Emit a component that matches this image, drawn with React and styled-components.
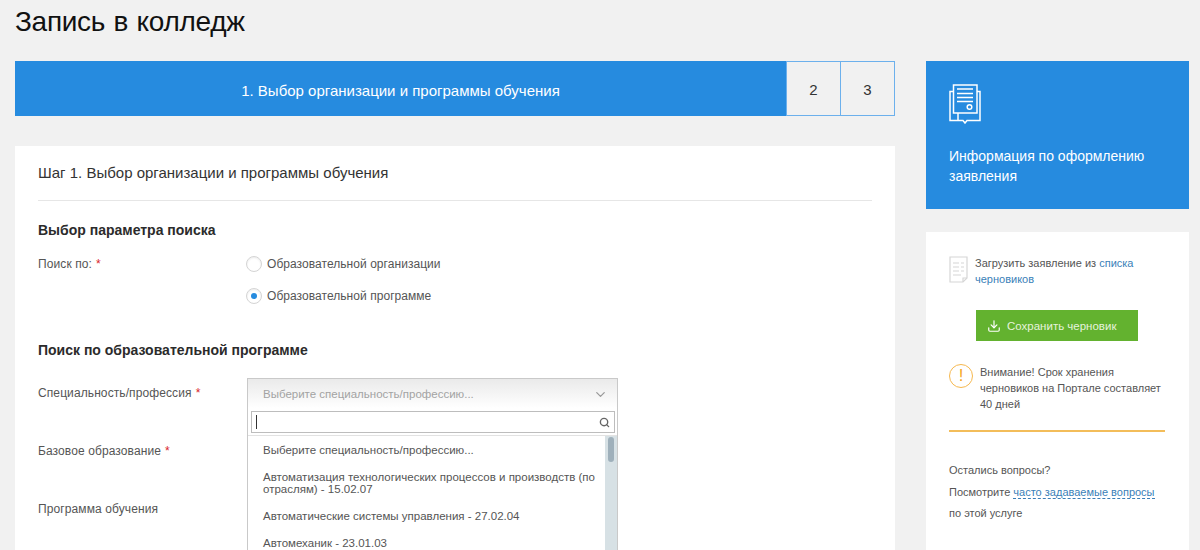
import styled, { createGlobalStyle } from 'styled-components';
import { Download, ChevronDown, Search } from 'lucide-react';

const GlobalStyle = createGlobalStyle`
  html, body {
    margin: 0;
    height: 550px;
    overflow: hidden;
    background: #f1f1f1;
    font-family: "Liberation Sans", Arial, sans-serif;
    color: #333;
  }
`;

const Page = styled.div`
  width: 1200px;
  height: 550px;
  overflow: hidden;
  box-sizing: border-box;
  padding: 0 11px 0 15px;
`;

const Title = styled.h1`
  margin: 0;
  height: 61px;
  padding-top: 5px;
  box-sizing: border-box;
  font-size: 28px;
  line-height: 34px;
  font-weight: 400;
  letter-spacing: -0.3px;
  word-spacing: 1px;
  color: #111;
`;

const Columns = styled.div`
  display: flex;
  gap: 31px;
  align-items: flex-start;
`;

const Main = styled.div`
  width: 880px;
  flex: none;
`;

const Steps = styled.div`
  display: flex;
  height: 55px;
  margin-bottom: 30px;
`;

const ActiveStep = styled.div`
  flex: 1;
  background: #268bdf;
  color: #fff;
  font-size: 15px;
  padding-top: 3px;
  display: flex;
  align-items: center;
  justify-content: center;
`;

const Step = styled.div`
  width: 55px;
  box-sizing: border-box;
  border: 1px solid #6cb0ec;
  margin-left: ${({ $first }) => ($first ? '0' : '-1px')};
  padding-top: 2px;
  font-size: 15px;
  color: #333;
  display: flex;
  align-items: center;
  justify-content: center;
`;

const Card = styled.div`
  background: #fff;
  padding: 0 23px;
  height: 404px;
`;

const CardHeader = styled.div`
  height: 54px;
  line-height: 54px;
  font-size: 15px;
  border-bottom: 1px solid #e6e6e6;
  color: #333;
`;

const SectionTitle = styled.h3`
  margin: 0;
  font-size: 14px;
  line-height: 18px;
  font-weight: 700;
  color: #2b2b2b;
  padding-top: ${({ $top }) => $top}px;
`;

const Row = styled.div`
  display: flex;
  margin-top: ${({ $top }) => $top || 0}px;
`;

const Label = styled.div`
  width: 209px;
  flex: none;
  box-sizing: border-box;
  padding-top: ${({ $pad }) => $pad || 0}px;
  font-size: 12px;
  letter-spacing: 0.1px;
  line-height: 16px;
  color: #555;
`;

const Required = styled.span`
  color: #d9242a;
  margin-left: 4px;
`;

const RadioGroup = styled.div`
  display: flex;
  flex-direction: column;
  gap: 16px;
`;

const RadioRow = styled.div`
  display: flex;
  align-items: center;
  gap: 5px;
  font-size: 12px;
  letter-spacing: 0.05px;
  line-height: 16px;
  color: #555;
`;

const RadioCircle = styled.span`
  width: 16px;
  height: 16px;
  margin-left: -1px;
  box-sizing: border-box;
  border: 1px solid #d4d4d4;
  border-radius: 50%;
  background: #fff;
  box-shadow: inset 0 1px 2px rgba(0, 0, 0, 0.08);
  display: flex;
  align-items: center;
  justify-content: center;

  &::after {
    content: '';
    display: ${({ $checked }) => ($checked ? 'block' : 'none')};
    width: 6px;
    height: 6px;
    border-radius: 50%;
    background: #268bdf;
  }
`;

const SelectWrap = styled.div`
  position: relative;
  width: 371px;
  height: 30px;
`;

const SelectHead = styled.div`
  height: 30px;
  box-sizing: border-box;
  border: 1px solid #c9c9c9;
  border-bottom: none;
  background: linear-gradient(#eaeaea, #fff);
  display: flex;
  align-items: center;
  justify-content: space-between;
  padding: 1px 9px 0 15px;
  font-size: 11.5px;
  color: #a3a3a3;
`;

const Dropdown = styled.div`
  position: absolute;
  left: 0;
  top: 30px;
  width: 371px;
  height: 144px;
  box-sizing: border-box;
  background: #fff;
  border: 1px solid #c9c9c9;
  border-top: none;
  border-bottom: none;
  overflow: hidden;
`;

const SearchBox = styled.div`
  height: 22px;
  margin: 3px 2px 2px 3px;
  box-sizing: border-box;
  border: 1px solid #bdbdbd;
  display: flex;
  align-items: center;
  justify-content: space-between;
  padding: 0 4px;
  color: #666;
`;

const Caret = styled.span`
  width: 1px;
  height: 14px;
  background: #333;
`;

const ListArea = styled.div`
  display: flex;
  height: 117px;
  border-top: 1px solid #e2e2e2;
`;

const OptionList = styled.div`
  flex: 1;
  padding: 0 10px 0 15px;
`;

const Option = styled.div`
  font-size: 11.5px;
  line-height: 12px;
  color: #555;
  margin-top: ${({ $top }) => $top}px;
`;

const ScrollTrack = styled.div`
  width: 12px;
  flex: none;
  background: #d7e1e5;
`;

const ScrollThumb = styled.div`
  width: 6px;
  height: 25px;
  margin: 1px 0 0 3px;
  border-radius: 3px;
  background: #9fb0bb;
`;

const Aside = styled.aside`
  width: 263px;
  flex: none;
`;

const InfoBox = styled.div`
  height: 148px;
  box-sizing: border-box;
  background: #268bdf;
  color: #fff;
  padding: 23px 23px 0;
  margin-bottom: 23px;
`;

const InfoTitle = styled.div`
  margin-top: 18px;
  font-size: 14px;
  line-height: 20px;
`;

const SideCard = styled.div`
  background: #fff;
  height: 318px;
  box-sizing: border-box;
  padding: 23px 24px 0 23px;
`;

const SideRow = styled.div`
  display: flex;
  gap: 7px;
  font-size: 11px;
  line-height: 16px;
  color: #555;
`;

const Link = styled.a`
  color: #3a7fb8;
  text-decoration: none;
`;

const DashedLink = styled(Link)`
  border-bottom: 1px dashed #3a7fb8;
`;

const SaveButton = styled.button`
  display: flex;
  align-items: center;
  gap: 6px;
  width: 162px;
  height: 31px;
  margin: 23px 0 0 27px;
  padding: 0 0 0 11px;
  border: none;
  background: #63b22f;
  color: #e6f3dc;
  font-family: inherit;
  font-size: 11.5px;
`;

const Warning = styled(SideRow)`
  margin-top: 23px;
  gap: 7px;
  padding-bottom: 18px;
  border-bottom: 2px solid #f3bd5a;
`;

const WarnIcon = styled.span`
  width: 24px;
  height: 24px;
  flex: none;
  box-sizing: border-box;
  border: 1px solid #f6b84e;
  border-radius: 50%;
  color: #f6a623;
  font-size: 17px;
  line-height: 22px;
  text-align: center;
`;

const Questions = styled.div`
  margin-top: 28px;
  font-size: 11px;
  line-height: 21.500px;
  color: #555;
`;

const DraftSvg = styled.svg`
  flex: none;
  margin-top: 1px;
`;

const DocIcon = () => (
  <svg width="32" height="40" viewBox="0 0 32 40" fill="none" stroke="#fff" strokeWidth="1.5">
    <path d="M4.500 7.500H1v29h13l2 2.500 2-2.500h13v-29h-3" />
    <path d="M4.500 1H28v28H4.500z" />
    <path d="M8 5h16M8 9.500h16M8 13.500h16M8 17.500h16" />
    <path d="M9 29v7.500" />
    <circle cx="20.500" cy="23" r="2.300" />
  </svg>
);

const DraftIcon = () => (
  <DraftSvg width="19" height="27" viewBox="0 0 19 27" fill="none" stroke="#d6d6d6" strokeWidth="1.2">
    <path d="M1 1h17v21l-4 4H1z" />
    <path d="M14 26v-4h4" />
    <path d="M4 7h6M12 7h3M4 11h6M12 11h3M4 15h6M12 15h3M4 19h8" />
  </DraftSvg>
);

const App = () => {
  return (
    <Page>
      <GlobalStyle />
      <Title>Запись в колледж</Title>
      <Columns>
        <Main>
          <Steps>
            <ActiveStep>1. Выбор организации и программы обучения</ActiveStep>
            <Step $first>2</Step>
            <Step>3</Step>
          </Steps>
          <Card>
            <CardHeader>Шаг 1. Выбор организации и программы обучения</CardHeader>
            <SectionTitle $top={20}>Выбор параметра поиска</SectionTitle>
            <Row $top={17}>
              <Label>Поиск по:<Required>*</Required></Label>
              <RadioGroup>
                <RadioRow><RadioCircle />Образовательной организации</RadioRow>
                <RadioRow><RadioCircle $checked />Образовательной программе</RadioRow>
              </RadioGroup>
            </Row>
            <SectionTitle $top={37}>Поиск по образовательной программе</SectionTitle>
            <Row $top={19}>
              <Label $pad={7}>Специальность/профессия<Required>*</Required></Label>
              <SelectWrap>
                <SelectHead>
                  Выберите специальность/профессию...
                  <ChevronDown size={15} color="#999" />
                </SelectHead>
                <Dropdown>
                  <SearchBox>
                    <Caret />
                    <Search size={11} strokeWidth={3} />
                  </SearchBox>
                  <ListArea>
                    <OptionList>
                      <Option $top={8}>Выберите специальность/профессию...</Option>
                      <Option $top={15}>Автоматизация технологических процессов и производств (по отраслям) - 15.02.07</Option>
                      <Option $top={15}>Автоматические системы управления - 27.02.04</Option>
                      <Option $top={15}>Автомеханик - 23.01.03</Option>
                    </OptionList>
                    <ScrollTrack><ScrollThumb /></ScrollTrack>
                  </ListArea>
                </Dropdown>
              </SelectWrap>
            </Row>
            <Row $top={35}><Label>Базовое образование<Required>*</Required></Label></Row>
            <Row $top={42}><Label>Программа обучения</Label></Row>
          </Card>
        </Main>
        <Aside>
          <InfoBox>
            <DocIcon />
            <InfoTitle>Информация по оформлению заявления</InfoTitle>
          </InfoBox>
          <SideCard>
            <SideRow>
              <DraftIcon />
              <div>Загрузить заявление из <Link>списка черновиков</Link></div>
            </SideRow>
            <SaveButton><Download size={14} color="#fff" />Сохранить черновик</SaveButton>
            <Warning>
              <WarnIcon>!</WarnIcon>
              <div>Внимание! Срок хранения черновиков на Портале составляет 40 дней</div>
            </Warning>
            <Questions>
              Остались вопросы?<br />
              Посмотрите <DashedLink>часто задаваемые вопросы</DashedLink><br />
              по этой услуге
            </Questions>
          </SideCard>
        </Aside>
      </Columns>
    </Page>
  );
};

export default App;
